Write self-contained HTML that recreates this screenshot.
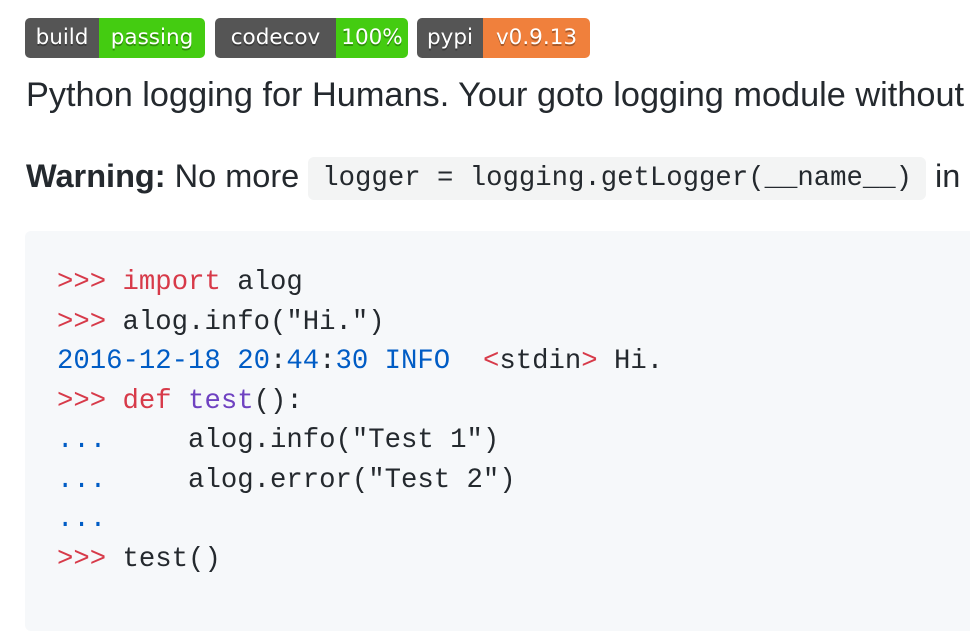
<!DOCTYPE html>
<html><head><meta charset="utf-8"><style>
body{margin:0;background:#fff;width:970px;height:582px;overflow:hidden;font-family:"Liberation Sans",sans-serif;color:#24292e}
.b{position:absolute;top:18px;height:40px;border-radius:5px;overflow:hidden;display:flex;font-family:"DejaVu Sans",sans-serif;font-size:21.5px;color:#fff;line-height:40px;text-shadow:0 2px 0 rgba(0,0,0,.3)}
.b span{display:block;text-align:center}
.g{background:#555}
p{position:absolute;left:26px;margin:0;font-size:34.3px;white-space:nowrap}
.ic{background:#f3f4f4;border-radius:6px;font-family:"Liberation Mono",monospace;font-size:27.3px;padding:6px 14px;vertical-align:2px}
pre{position:absolute;left:25px;top:231px;width:960px;height:400px;margin:0;background:#f6f8fa;border-radius:6px;font-family:"Liberation Mono",monospace;font-size:27.3px;line-height:39.5px;padding:32px 0 0 32px;box-sizing:border-box;color:#24292e}
.r{color:#d73a49}.u{color:#005cc5}.p{color:#6f42c1}
</style></head><body>
<div class="b" style="left:25px"><span class="g" style="width:74px">build</span><span style="width:106px;background:#44cc11">passing</span></div>
<div class="b" style="left:215px"><span class="g" style="width:121px">codecov</span><span style="width:72px;background:#44cc11">100%</span></div>
<div class="b" style="left:417px"><span class="g" style="width:66px">pypi</span><span style="width:107px;background:#f0803c">v0.9.13</span></div>
<p style="top:76px">Python logging for Humans. Your goto logging module without</p>
<p style="top:158px;font-size:32.5px"><b>Warning:</b> No more <span class="ic">logger = logging.getLogger(__name__)</span> in</p>
<pre><span class="r">&gt;&gt;&gt;</span> <span class="r">import</span> alog
<span class="r">&gt;&gt;&gt;</span> alog.info("Hi.")
<span class="u">2016-12-18 20</span>:<span class="u">44</span>:<span class="u">30 INFO</span>  <span class="r">&lt;</span>stdin<span class="r">&gt;</span> Hi.
<span class="r">&gt;&gt;&gt;</span> <span class="r">def</span> <span class="p">test</span>():
<span class="u">...</span>     alog.info("Test 1")
<span class="u">...</span>     alog.error("Test 2")
<span class="u">...</span>
<span class="r">&gt;&gt;&gt;</span> test()</pre>
</body></html>
